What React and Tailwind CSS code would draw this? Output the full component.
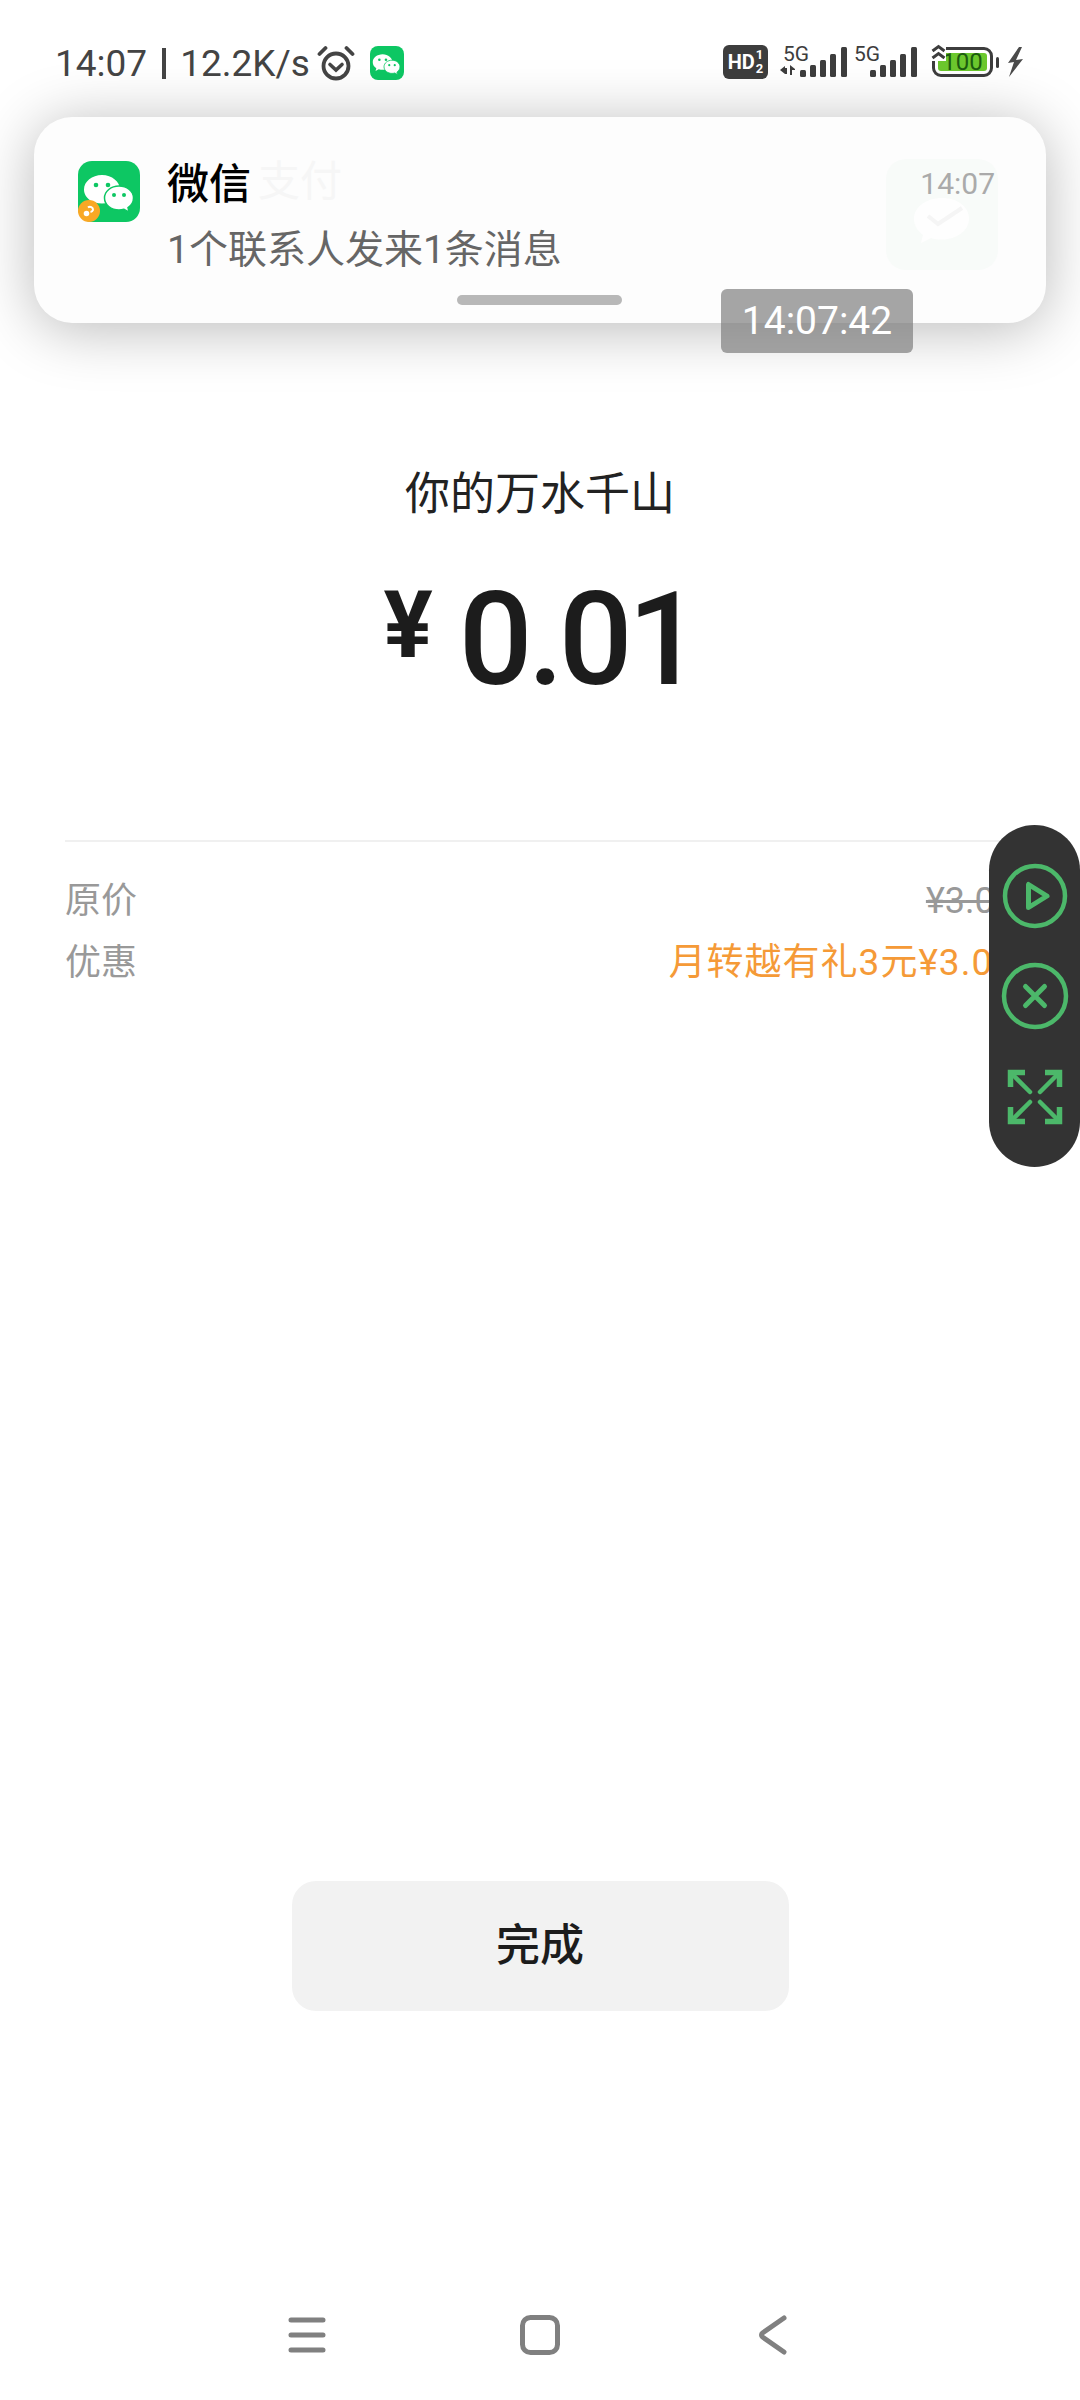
import React from "react";

const FONT = "font-['Roboto','Noto_Sans_CJK_SC',sans-serif]";

const WeChatGlyph = ({ className, fill = "#ffffff", eye = "#07c160" }) => (
  <svg viewBox="0 0 60 60" className={className}>
    <path
      d="M23 13c-10 0-18 6.500-18 14.500 0 4.500 2.500 8.500 6.500 11l-1.500 5 6-3c2.200.6 4.500 1 7 1 10 0 18-6.500 18-14S33 13 23 13z"
      fill={fill}
    />
    <circle cx="17" cy="23" r="2.300" fill={eye} />
    <circle cx="29" cy="23" r="2.300" fill={eye} />
    <path
      d="M40 24c-8 0-14.500 5.300-14.500 12S32 48 40 48c1.800 0 3.500-.3 5-.8l5 3-1-4.500c3.500-2.300 5.500-5.800 5.500-9.700 0-6.700-6.500-12-14.500-12z"
      fill={fill}
      stroke={eye}
      strokeWidth="1.500"
    />
    <circle cx="35" cy="33" r="2" fill={eye} />
    <circle cx="45" cy="33" r="2" fill={eye} />
  </svg>
);

const AlarmIcon = () => (
  <svg viewBox="0 0 38 36" className="w-[38px] h-[36px]" fill="none" stroke="#444" strokeLinecap="round">
    <circle cx="19" cy="21" r="12.500" strokeWidth="3.800" />
    <path d="M13 19.500 19 25l6-5.500" strokeWidth="3.600" />
    <path d="M2.500 9 8.500 3M35.500 9 29.500 3" strokeWidth="3.800" />
  </svg>
);

const SignalBars = () => (
  <svg viewBox="0 0 47 30" className="w-[47px] h-[30px]" fill="#3d3d3d">
    <rect x="0" y="23" width="6" height="7" rx="1.500" />
    <rect x="10" y="18" width="6" height="12" rx="1.500" />
    <rect x="20" y="13" width="6" height="17" rx="1.500" />
    <rect x="30" y="7" width="6" height="23" rx="1.500" />
    <rect x="41" y="0" width="6" height="30" rx="1.500" />
  </svg>
);

const StatusBar = () => (
  <div className="h-[115px] flex items-start justify-between pl-[55px] pr-[56px] pt-[45px] bg-white">
    <div className="flex items-center h-[36px] text-[37px] leading-none text-[#444]">
      <span>14:07</span>
      <span className="w-[4px] h-[31px] bg-[#444] ml-[15px] mr-[14px]" />
      <span>12.2K/s</span>
      <span className="ml-[7px]">
        <AlarmIcon />
      </span>
      <div className="ml-[15px] w-[34px] h-[34px] rounded-[8px] bg-[#0dc763] flex items-center justify-center">
        <WeChatGlyph className="w-[33px] h-[33px]" eye="#0dc763" />
      </div>
    </div>
    <div className="flex items-center h-[34px] text-[#3d3d3d]">
      <div className="w-[45px] h-[34px] rounded-[6px] bg-[#3d3d3d] text-white flex items-center justify-center font-bold">
        <span className="text-[20px] leading-none">HD</span>
        <span className="flex flex-col text-[13px] leading-[14px] ml-[1px]">
          <span>1</span>
          <span>2</span>
        </span>
      </div>
      <div className="relative ml-[12px] w-[67px] h-[34px] pb-[2px] flex items-end justify-between">
        <span className="absolute left-[3px] top-0 text-[21px] leading-[19px]">5G</span>
        <svg viewBox="0 0 17 10" className="w-[17px] h-[10px] mb-[2px]" fill="#3d3d3d">
          <path d="M0 5l5-4v8zM5 3h2v6H5zM10 0l5 4v1h-3v5h-2z" />
        </svg>
        <SignalBars />
      </div>
      <div className="relative ml-[7px] w-[63px] h-[34px] pb-[2px] flex items-end justify-end">
        <span className="absolute left-0 top-0 text-[21px] leading-[19px]">5G</span>
        <SignalBars />
      </div>
      <div className="relative ml-[15px] w-[61px] h-[30px] rounded-[9px] border-[3px] border-[#3d3d3d] p-[3px]">
        <div className="h-full rounded-[3px] bg-[#6cc82e]" />
        <span className="absolute inset-0 flex items-center justify-center text-[24px] leading-none text-[#1c5c10]">
          100
        </span>
        <div className="absolute left-[-4px] top-[-6px] w-[15px] h-[17px] bg-white">
          <svg viewBox="0 0 15 17" className="w-[15px] h-[17px]" fill="none" stroke="#3d3d3d" strokeWidth="3">
            <path d="M1.500 7 7.500 2.500 13.500 7M1.500 14 7.500 9.500 13.500 14" />
          </svg>
        </div>
      </div>
      <div className="ml-[3px] w-[3px] h-[11px] rounded-[2px] bg-[#3d3d3d]" />
      <svg viewBox="0 0 17 30" className="ml-[8px] w-[17px] h-[30px]" fill="#4a4a4a">
        <path d="M12 0 1 16l6-1-5 15 14-18-7 1 6-13z" />
      </svg>
    </div>
  </div>
);

const Notification = () => (
  <div className="absolute left-[34px] top-[117px] w-[1012px] h-[206px] rounded-[38px] bg-[#fdfdfd] shadow-[0_6px_60px_rgba(0,0,0,0.28)]">
    {/* page behind it shows through faintly */}
    <span className="absolute left-[224px] top-[41px] text-[42px] leading-[48px] text-[#f6f6f6]">支付</span>
    <div className="absolute left-[852px] top-[42px] w-[112px] h-[111px] rounded-[20px] bg-[#f8fbf9] flex items-center justify-center">
      <svg viewBox="0 0 60 50" className="mt-[8px] w-[60px] h-[50px]" fill="none">
        <path d="M30 4C14 4 2 13 2 25c0 7 4 12 9 16l-2 8 10-5c3 1 7 1.500 11 1.500 15 0 27-9 27-21S45 4 30 4z" fill="#fefefe" />
        <path d="M16 22l10 8 24-16" stroke="#f5f5f5" strokeWidth="4" />
      </svg>
    </div>
    <div className="relative flex pl-[44px] pt-[44px]">
      <div className="relative w-[62px] h-[61px] rounded-[14px] bg-[#0dc763] flex items-center justify-center">
        <WeChatGlyph className="w-[60px] h-[60px]" eye="#0dc763" />
        <div className="absolute left-0 bottom-0 w-[22px] h-[22px] rounded-full bg-[#f9a825] flex items-center justify-center">
          <svg viewBox="0 0 14 14" className="w-[14px] h-[14px]" fill="none" stroke="#fff" strokeWidth="2">
            <circle cx="4.500" cy="9.500" r="1.800" fill="#fff" />
            <path d="M6 3.500a3 3 0 0 1 5 2.500c-.4 1.300-1.300 1.800-2.500 2" />
          </svg>
        </div>
      </div>
      <div className="ml-[27px] flex flex-col">
        <span className="mt-[-1px] text-[42px] leading-[50px] font-medium text-black">微信</span>
        <span className="mt-[16px] text-[39px] leading-[48px] text-[#666]">1个联系人发来1条消息</span>
      </div>
    </div>
    <span className="absolute right-[51px] top-[49px] text-[30px] leading-[36px] text-[#aaa]">14:07</span>
    <div className="absolute left-[423px] top-[178px] w-[165px] h-[10px] rounded-full bg-[#b8b8b8]" />
  </div>
);

const FloatingPill = () => (
  <div className="absolute right-0 top-[825px] w-[91px] h-[342px] rounded-full bg-[#333] flex flex-col items-center pt-[38px]">
    <svg viewBox="0 0 66 66" className="w-[66px] h-[66px]" fill="none" stroke="#4cb86a" strokeWidth="4.500" strokeLinejoin="round" strokeLinecap="round">
      <circle cx="33" cy="33" r="30" />
      <path d="M26.500 21.500v23l18.500-11.500z" strokeWidth="5" />
    </svg>
    <svg viewBox="0 0 68 68" className="mt-[33px] w-[68px] h-[68px]" fill="none" stroke="#4cb86a" strokeWidth="4.500" strokeLinecap="round">
      <circle cx="34" cy="34" r="31" />
      <path d="M24.500 24.500l19 19M43.500 24.500l-19 19" strokeWidth="5" />
    </svg>
    <svg viewBox="0 0 56 56" className="mt-[39px] w-[56px] h-[56px]" fill="none" stroke="#4cb86a" strokeWidth="4.500" strokeLinecap="round">
      <path d="M23 23 6 6M50 6 33 23M23 33 6 50M33 33l17 17" />
      <path d="M3.500 18V3.500H18M38 3.500h14.500V18M3.500 38v14.500H18M38 52.500h14.500V38" strokeWidth="5.500" strokeLinecap="butt" />
    </svg>
  </div>
);

const NavBar = () => (
  <div className="flex items-center justify-center gap-[193px] h-[40px] mb-[45px]">
    <svg viewBox="0 0 40 40" className="w-[40px] h-[40px]" fill="none" stroke="#808080" strokeWidth="5" strokeLinecap="round">
      <path d="M4 5h32M4 20h32M4 35h32" />
    </svg>
    <svg viewBox="0 0 40 40" className="w-[40px] h-[40px]" fill="none" stroke="#808080" strokeWidth="5">
      <rect x="2.500" y="2.500" width="35" height="35" rx="8" />
    </svg>
    <svg viewBox="0 0 40 40" className="w-[40px] h-[40px]" fill="none" stroke="#808080" strokeWidth="5" strokeLinecap="round" strokeLinejoin="round">
      <path d="M31 3 9.500 18a2.500 2.500 0 0 0 0 4L31 37" />
    </svg>
  </div>
);

const App = () => {
  return (
    <div className={`relative w-[1080px] h-[2400px] overflow-hidden bg-white flex flex-col ${FONT}`}>
      <StatusBar />

      <p className="mt-[350px] text-center text-[45px] leading-[60px] text-[#222]">你的万水千山</p>
      <div className="mt-[48px] h-[134px] flex items-baseline justify-center text-[#1c1c1c] font-medium">
        <span className="text-[92px] font-bold leading-[134px] -translate-y-[27px]">¥</span>
        <span className="ml-[26px] text-[130px] leading-[134px] tracking-[-5px]">0.01</span>
      </div>

      <div className="mt-[133px] mx-[65px] border-t-2 border-[#f0f0f0]" />
      <div className="mt-[35px] mx-[65px] flex flex-col gap-[14px] text-[36px] leading-[48px]">
        <div className="flex justify-between text-[#999]">
          <span>原价</span>
          <span className="line-through">¥3.00</span>
        </div>
        <div className="flex justify-between">
          <span className="text-[#999]">优惠</span>
          <span className="text-[37px] tracking-[1px] text-[#f59a37]">月转越有礼3元¥3.00</span>
        </div>
      </div>

      <button className="mt-auto mb-[304px] self-center w-[497px] h-[130px] rounded-[24px] bg-[#f2f2f2] text-[44px] font-medium text-[#1c1c1c]">
        完成
      </button>
      <NavBar />

      <Notification />
      <div className="absolute left-[721px] top-[289px] w-[192px] h-[64px] rounded-[6px] bg-[#7f7f7f]/70 flex items-center justify-center text-[39px] text-white">
        14:07:42
      </div>
      <FloatingPill />
    </div>
  );
};

export default App;
